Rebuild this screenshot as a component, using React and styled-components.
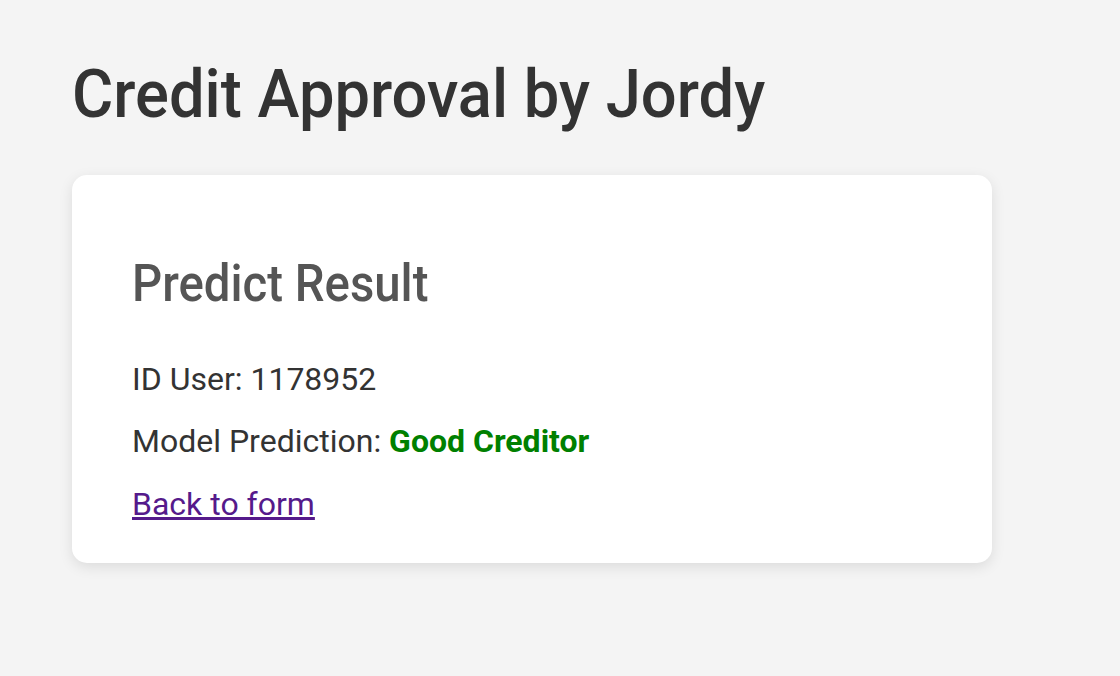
import React from 'react';
import styled, { createGlobalStyle } from 'styled-components';

const GlobalStyle = createGlobalStyle`
  html, body {
    margin: 0;
    padding: 0;
    background: #f4f4f4;
    font-family: Roboto, "Liberation Sans", Arial, sans-serif;
  }
`;

const Page = styled.div`
  padding: 54px 72px 60px;
  min-height: 676px;
  box-sizing: border-box;
`;

// headings in the shot use a narrower face than the installed Roboto
const Title = styled.h1`
  margin: 0 0 41px;
  font-size: 67px;
  line-height: 1.2;
  font-weight: 500;
  color: #333;
  transform: scaleX(0.944);
  transform-origin: left center;
`;

const Card = styled.div`
  width: 920px;
  box-sizing: border-box;
  padding: 78px 60px 40px;
  background: #fff;
  border-radius: 15px;
  box-shadow: 0 4px 14px rgba(0, 0, 0, 0.1);
`;

const Heading = styled.h2`
  margin: 0 0 44px;
  font-size: 52px;
  line-height: 1.2;
  font-weight: 500;
  color: #555;
  transform: scaleX(0.91);
  transform-origin: left center;
`;

const Line = styled.p`
  margin: 0 0 24px;
  font-size: 32px;
  line-height: 1.2;
  color: #333;
  &:last-child {
    margin-bottom: 0;
  }
`;

const Verdict = styled.strong`
  font-weight: 700;
  color: ${({ good }) => (good ? 'green' : 'red')};
`;

const BackLink = styled.a`
  color: #551a8b;
  text-decoration: underline;
`;

const App = () => {
  return (
    <>
      <GlobalStyle />
      <Page>
        <Title>Credit Approval by Jordy</Title>
        <Card>
          <Heading>Predict Result</Heading>
          <Line>ID User: 1178952</Line>
          <Line>
            Model Prediction: <Verdict good>Good Creditor</Verdict>
          </Line>
          <Line>
            <BackLink href="#">Back to form</BackLink>
          </Line>
        </Card>
      </Page>
    </>
  );
};

export default App;
